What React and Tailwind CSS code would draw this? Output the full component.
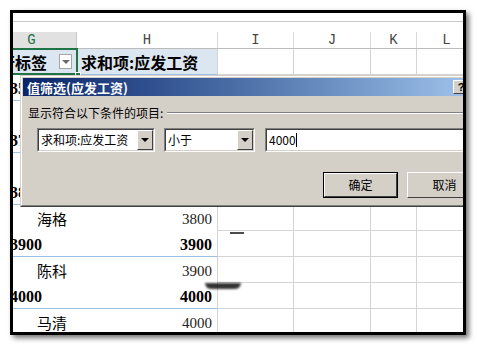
import React from 'react'

const cjk = "font-['Noto_Sans_CJK_SC',sans-serif]"
const serif = "font-['Liberation_Serif','Noto_Sans_CJK_SC',serif]"
const mono = "font-['Liberation_Mono',monospace]"

const rows = [
  { group: true, label: '3500', value: '3500' },
  { group: false, label: '赵磊', value: '3500' },
  { group: true, label: '3700', value: '3700' },
  { group: false, label: '钱华', value: '3700' },
  { group: true, label: '3800', value: '3800' },
  { group: false, label: '海格', value: '3800' },
  { group: true, label: '3900', value: '3900' },
  { group: false, label: '陈科', value: '3900' },
  { group: true, label: '4000', value: '4000' },
  { group: false, label: '马清', value: '4000' },
]

const emptyCells = () => (
  <>
    <div className="w-[76px] h-full border-r border-b border-[#d4d4d4]" />
    <div className="w-[77px] h-full border-r border-b border-[#d4d4d4]" />
    <div className="w-[46px] h-full border-r border-b border-[#d4d4d4]" />
    <div className="w-[60px] h-full border-r border-b border-[#d4d4d4]" />
  </>
)

const Sheet = () => (
  <div className="ml-[-26px] w-[520px]">
    <div className="h-[9px] border-b border-[#c8c8c8]" />
    <div className="h-[10px]" />
    {/* column letters */}
    <div className={`flex h-[17px] border-b border-[#bcbcbc] text-[14px] leading-[16px] ${mono}`}>
      <div className="w-[90px] bg-[#e1e1e1] text-[#217346] text-center border-r border-[#c8c8c8]">G</div>
      <div className="w-[141px] text-[#444] text-center border-r border-[#dadada]">H</div>
      <div className="w-[76px] text-[#444] text-center border-r border-[#dadada]">I</div>
      <div className="w-[77px] text-[#444] text-center border-r border-[#dadada]">J</div>
      <div className="w-[46px] text-[#444] text-center border-r border-[#dadada]">K</div>
      <div className="w-[60px] text-[#444] text-center border-r border-[#dadada]">L</div>
    </div>
    {/* pivot header */}
    <div className="flex h-[26px]">
      <div className={`w-[90px] h-full bg-[#dce6f1] border-b border-[#9bc2e6] flex items-center justify-between pl-[12px] pr-[5px] text-[16px] font-bold text-black ${cjk}`}>
        <span>行标签</span>
        <span className="w-[13px] h-[15px] border border-[#a6a6a6] bg-white flex items-center justify-center">
          <span className="w-0 h-0 border-l-[4px] border-r-[4px] border-t-[4px] border-l-transparent border-r-transparent border-t-[#6b6b6b]" />
        </span>
      </div>
      <div className={`w-[141px] h-full bg-[#dce6f1] border-b border-r border-b-[#9bc2e6] border-r-[#d4d4d4] flex items-center pl-[4px] text-[16px] font-bold text-black ${cjk}`}>
        求和项:应发工资
      </div>
      {emptyCells()}
    </div>
    {rows.map((r, i) => (
      <div key={i} className="flex h-[26px]">
        {r.group ? (
          <>
            <div className={`w-[90px] h-full border-b border-[#9bc2e6] flex items-center pt-[2px] pl-[23px] text-[16px] font-bold text-black ${serif}`}>
              {r.label}
            </div>
            <div className={`w-[141px] h-full border-b border-r border-b-[#9bc2e6] border-r-[#d4d4d4] flex items-center justify-end pt-[2px] pr-[5px] text-[16px] font-bold text-black ${serif}`}>
              {r.value}
            </div>
          </>
        ) : (
          <>
            <div className={`w-[90px] h-full flex items-center pt-[3px] pl-[50px] text-[15px] text-black ${cjk}`}>
              {r.label}
            </div>
            <div className={`w-[141px] h-full border-r border-[#d4d4d4] flex items-center justify-end pt-[3px] pr-[5px] text-[15px] text-[#222] ${serif}`}>
              {r.value}
            </div>
          </>
        )}
        {emptyCells()}
      </div>
    ))}
  </div>
)

const DownArrow = () => (
  <span className="w-0 h-0 border-l-[4px] border-r-[4px] border-t-[4px] border-l-transparent border-r-transparent border-t-black" />
)

const ComboButton = () => (
  <div className="w-[16px] h-full bg-[#d4d0c8] border border-t-white border-l-white border-r-[#404040] border-b-[#404040] flex items-center justify-center">
    <DownArrow />
  </div>
)

const Sunken = ({ className, children }) => (
  <div className={`h-[24px] border border-t-[#808080] border-l-[#808080] border-r-white border-b-white ${className}`}>
    <div className="h-full border border-t-[#404040] border-l-[#404040] border-r-[#d4d0c8] border-b-[#d4d0c8] bg-white flex items-center">
      {children}
    </div>
  </div>
)

const Dialog = () => (
  <div className="absolute left-[7px] top-[62px] w-[472px] h-[132px] border border-t-[#d4d0c8] border-l-[#d4d0c8] border-r-[#404040] border-b-[#404040]">
    <div className="h-full border border-t-white border-l-white border-r-[#808080] border-b-[#808080] bg-[#d4d0c8] p-px">
      <div className="h-[18px] bg-gradient-to-r from-[#0a246a] to-[#a6caf0] flex items-center justify-between pl-[4px] pr-[20px]">
        <span className={`text-white text-[13px] font-bold leading-none ${cjk}`}>值筛选(应发工资)</span>
        <div className="w-[16px] h-[14px] bg-[#d4d0c8] border border-t-white border-l-white border-r-[#404040] border-b-[#404040] flex items-center justify-center text-[11px] font-bold leading-none text-black font-['Liberation_Sans',sans-serif]">?</div>
      </div>
      <div className={`text-[12px] text-black ${cjk}`}>
        <div className="flex items-center pt-[9px] pl-[5px] h-[25px]">
          <span className="leading-[16px]">显示符合以下条件的项目:</span>
          <div className="flex-1 ml-[4px] border-t border-b border-t-[#808080] border-b-white" />
        </div>
        <div className="flex mt-[7px] ml-[14px] gap-[9px]">
          <Sunken className="w-[118px]">
            <span className="flex-1 pl-[2px]">求和项:应发工资</span>
            <ComboButton />
          </Sunken>
          <Sunken className="w-[91px]">
            <span className="flex-1 pl-[2px]">小于</span>
            <ComboButton />
          </Sunken>
          <Sunken className="w-[220px] ml-px">
            <span className="pl-[2px]">4000</span>
            <span className="w-px h-[14px] bg-black" />
          </Sunken>
        </div>
        <div className="flex mt-[20px] ml-[300px] gap-[9px]">
          <div className="w-[75px] h-[26px] border border-black">
            <div className="h-full border border-t-white border-l-white border-r-[#404040] border-b-[#404040] flex items-center justify-center">
              确定
            </div>
          </div>
          <div className="w-[75px] h-[26px] border border-t-white border-l-white border-r-[#404040] border-b-[#404040] flex items-center justify-center">
            取消
          </div>
        </div>
      </div>
    </div>
  </div>
)

export default function App() {
  return (
    <div className="w-[477px] h-[347px] bg-white pt-[10px] pl-[10px]">
      <div className="relative w-[456px] h-[325px] border-[3px] border-black overflow-hidden bg-white shadow-[3px_3px_5px_rgba(0,0,0,0.55)]">
        <Sheet />
        {/* selected cell G4 */}
        <div className="absolute left-[-5px] top-[35px] w-[70px] h-[27px] border-2 border-[#217346]" />
        <div className="absolute left-[62px] top-[59px] w-[6px] h-[6px] bg-[#217346] border border-white" />
        <Dialog />
        {/* screenshot smudges */}
        <div className="absolute left-[192px] top-[270px] w-[36px] h-[6px] rounded-b-full bg-black/80 blur-[1px]" />
        <div className="absolute left-[217px] top-[219px] w-[14px] h-[2px] bg-black/70 blur-[0.5px]" />
      </div>
    </div>
  )
}
